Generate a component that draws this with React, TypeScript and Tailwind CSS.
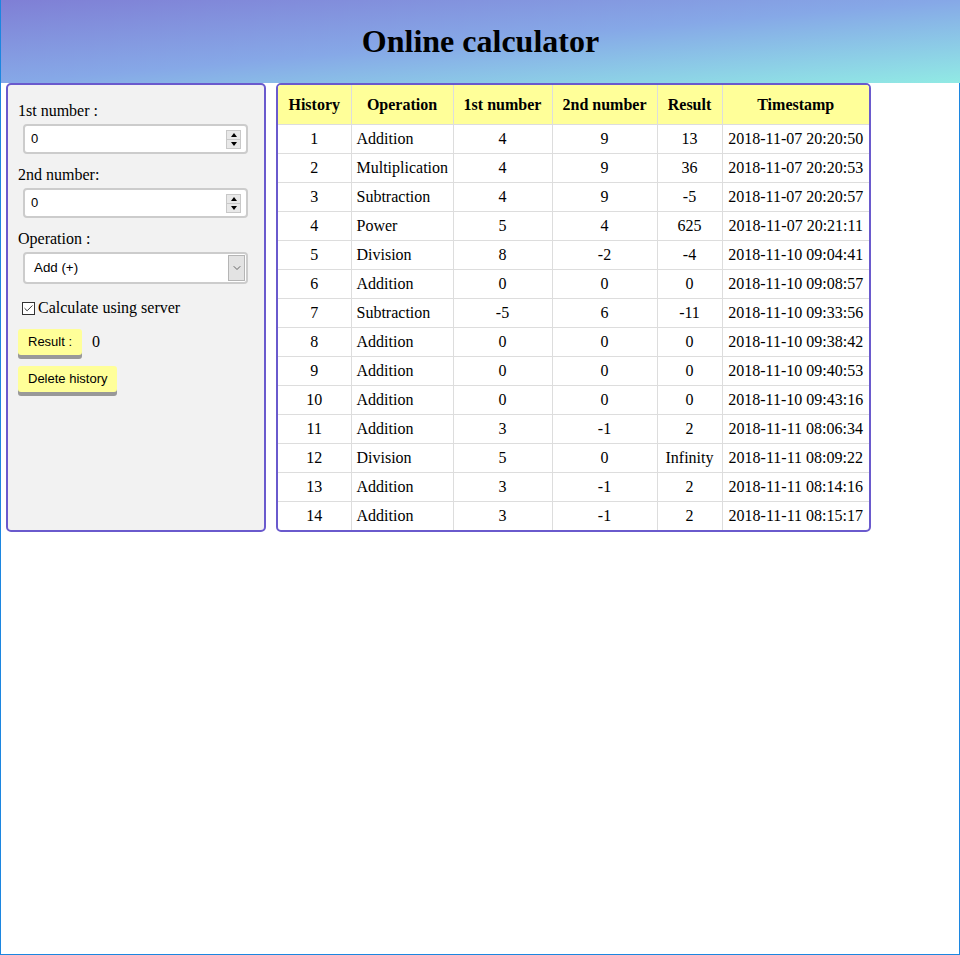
import { Check, ChevronDown } from 'lucide-react'

interface Entry {
  id: number
  op: string
  a: string
  b: string
  result: string
  time: string
}

const history: Entry[] = [
  { id: 1, op: 'Addition', a: '4', b: '9', result: '13', time: '2018-11-07 20:20:50' },
  { id: 2, op: 'Multiplication', a: '4', b: '9', result: '36', time: '2018-11-07 20:20:53' },
  { id: 3, op: 'Subtraction', a: '4', b: '9', result: '-5', time: '2018-11-07 20:20:57' },
  { id: 4, op: 'Power', a: '5', b: '4', result: '625', time: '2018-11-07 20:21:11' },
  { id: 5, op: 'Division', a: '8', b: '-2', result: '-4', time: '2018-11-10 09:04:41' },
  { id: 6, op: 'Addition', a: '0', b: '0', result: '0', time: '2018-11-10 09:08:57' },
  { id: 7, op: 'Subtraction', a: '-5', b: '6', result: '-11', time: '2018-11-10 09:33:56' },
  { id: 8, op: 'Addition', a: '0', b: '0', result: '0', time: '2018-11-10 09:38:42' },
  { id: 9, op: 'Addition', a: '0', b: '0', result: '0', time: '2018-11-10 09:40:53' },
  { id: 10, op: 'Addition', a: '0', b: '0', result: '0', time: '2018-11-10 09:43:16' },
  { id: 11, op: 'Addition', a: '3', b: '-1', result: '2', time: '2018-11-11 08:06:34' },
  { id: 12, op: 'Division', a: '5', b: '0', result: 'Infinity', time: '2018-11-11 08:09:22' },
  { id: 13, op: 'Addition', a: '3', b: '-1', result: '2', time: '2018-11-11 08:14:16' },
  { id: 14, op: 'Addition', a: '3', b: '-1', result: '2', time: '2018-11-11 08:15:17' },
]

function NumberField() {
  return (
    <div className="ml-[5px] mr-[6px] h-[30px] flex items-center border-2 border-[#cccccc] rounded-[4px] bg-white pl-[6px] pr-[5px]">
      <span className="flex-1 text-[13px] font-['Liberation_Sans',sans-serif]">0</span>
      {/* spinner */}
      <span className="flex flex-col w-[15px] h-[19px] border border-[#c8c8c8] bg-[#e8e8e8]">
        <span className="flex-1 flex items-center justify-center border-b border-[#c8c8c8]">
          <span className="w-0 h-0 border-l-[3.5px] border-r-[3.5px] border-b-[4px] border-l-transparent border-r-transparent border-b-black" />
        </span>
        <span className="flex-1 flex items-center justify-center">
          <span className="w-0 h-0 border-l-[3.5px] border-r-[3.5px] border-t-[4px] border-l-transparent border-r-transparent border-t-black" />
        </span>
      </span>
    </div>
  )
}

function YellowButton({ label }: { label: string }) {
  return (
    <button className="h-[26px] px-[10px] bg-[#ffff99] rounded-[3px] shadow-[0_4px_0_#999999] text-[13px] font-['Liberation_Sans',sans-serif] text-black">
      {label}
    </button>
  )
}

export default function App() {
  return (
    <div className="h-[955px] flex flex-col bg-white font-['Liberation_Serif',serif] text-black">
      {/* Header */}
      <header className="h-[83px] pt-[23px] border-l border-[#1c86e0] bg-linear-to-br from-[#7f7fd5] via-[#86a8e7] to-[#91eae4]">
        <h1 className="text-center text-[32px] leading-[37px] font-bold">Online calculator</h1>
      </header>

      <div className="flex-1 border-l border-r border-b border-[#1c86e0]">
        <div className="flex items-stretch gap-[10px] pl-[5px]">
          {/* Calculator form */}
          <div className="w-[260px] border-2 border-[#6a5acd] rounded-[5px] bg-[#f2f2f2] px-[10px] pt-[17px] text-[16px] leading-[18px]">
            <div>1st number :</div>
            <div className="mt-[4px]">
              <NumberField />
            </div>
            <div className="mt-[12px]">2nd number:</div>
            <div className="mt-[4px]">
              <NumberField />
            </div>
            <div className="mt-[12px]">Operation :</div>
            <div className="mt-[4px] ml-[5px] mr-[6px] h-[32px] flex items-stretch border-2 border-[#cccccc] rounded-[4px] bg-white">
              <span className="flex-1 flex items-center pl-[9px] text-[13.33px] font-['Liberation_Sans',sans-serif]">Add (+)</span>
              <span className="w-[17px] my-[1px] mr-[1px] flex items-center justify-center bg-[#e3e3e3] border border-[#b5b5b5]">
                <ChevronDown size={12} strokeWidth={1.6} color="#444" />
              </span>
            </div>
            <div className="mt-[15px] flex items-center">
              <span className="ml-[4px] mr-[3px] w-[13px] h-[13px] flex items-center justify-center border border-[#333] bg-white">
                <Check size={11} strokeWidth={2} color="#222" />
              </span>
              <span>Calculate using server</span>
            </div>
            <div className="mt-[12px] flex items-center gap-[10px]">
              <YellowButton label="Result :" />
              <span>0</span>
            </div>
            <div className="mt-[11px]">
              <YellowButton label="Delete history" />
            </div>
          </div>

          {/* History table */}
          <div className="w-[595px] border-2 border-[#6a5acd] rounded-[5px] overflow-hidden bg-white">
            <table className="w-full table-fixed border-collapse text-[16px] leading-[18px]">
              <colgroup>
                <col className="w-[73px]" />
                <col className="w-[102px]" />
                <col className="w-[99px]" />
                <col className="w-[105px]" />
                <col className="w-[65px]" />
                <col className="w-[147px]" />
              </colgroup>
              <thead>
                <tr className="bg-[#ffff99]">
                  {['History', 'Operation', '1st number', '2nd number', 'Result', 'Timestamp'].map((h, i) => (
                    <th
                      key={h}
                      className={`h-[39px] p-0 pt-[1px] font-bold text-center border-b border-[#dddddd] ${i < 5 ? 'border-r' : ''}`}
                    >
                      {h}
                    </th>
                  ))}
                </tr>
              </thead>
              <tbody>
                {history.map((row, r) => {
                  const last = r === history.length - 1
                  const base = `h-[29px] p-0 border-[#dddddd] ${last ? '' : 'border-b'}`
                  return (
                    <tr key={row.id}>
                      <td className={`${base} border-r text-center`}>{row.id}</td>
                      <td className={`${base} border-r text-left pl-[5px] whitespace-nowrap`}>{row.op}</td>
                      <td className={`${base} border-r text-center`}>{row.a}</td>
                      <td className={`${base} border-r text-center`}>{row.b}</td>
                      <td className={`${base} border-r text-center`}>{row.result}</td>
                      <td className={`${base} text-center whitespace-nowrap`}>{row.time}</td>
                    </tr>
                  )
                })}
              </tbody>
            </table>
          </div>
        </div>
      </div>
    </div>
  )
}
